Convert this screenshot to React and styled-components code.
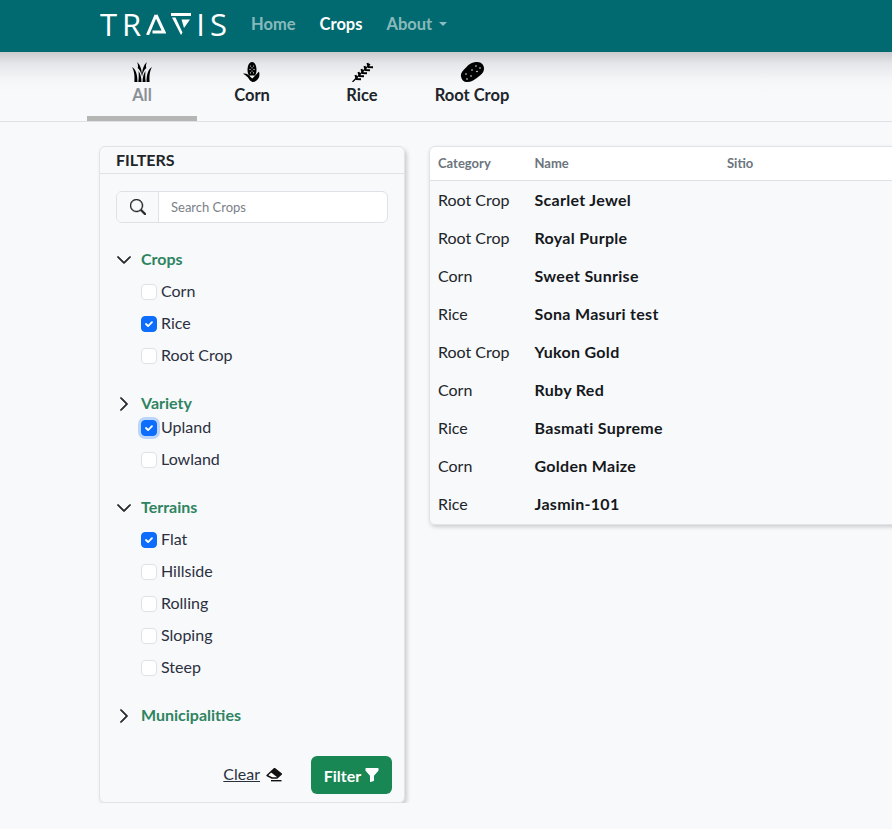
import styled, { createGlobalStyle } from "styled-components";
import { BsChevronDown, BsChevronRight, BsFunnelFill, BsSearch } from "react-icons/bs";

const GlobalStyle = createGlobalStyle`
  html, body {
    margin: 0;
    overflow: hidden;
    background: #f8f9fb;
  }
  body {
    font-family: Lato, "Noto Sans", sans-serif;
    font-size: 16px;
    color: #212529;
  }
`;

const Navbar = styled.nav`
  position: relative;
  z-index: 2;
  height: 52px;
  box-sizing: border-box;
  padding: 0 0 4px 100px;
  display: flex;
  align-items: center;
  background: #006a70;
`;

const Brand = styled.div`
  width: 127px;
  height: 22px;
  margin-right: 24px;
  display: flex;
  align-items: center;
  justify-content: space-between;
  color: #fff;
  font-size: 31px;
  line-height: 22px;
  font-family: "Open Sans", sans-serif;
  font-weight: 500;
`;

const NavLink = styled.a`
  margin-right: 24px;
  display: flex;
  align-items: center;
  font-weight: 700;
  font-size: 16.5px;
  color: ${({ $active }) => ($active ? "#fff" : "rgba(255,255,255,.55)")};
`;

const Caret = styled.span`
  margin-left: 7px;
  border-top: 4px solid currentColor;
  border-left: 4px solid transparent;
  border-right: 4px solid transparent;
`;

const TabBar = styled.div`
  height: 69px;
  padding-left: 87px;
  display: flex;
  border-bottom: 1px solid #dee2e6;
  background: linear-gradient(#c9cacd 0, #e6e7ea 12px, #f5f6f8 28px, #f8f9fb 40px);
`;

const Tab = styled.div`
  width: 110px;
  height: 69px;
  box-sizing: border-box;
  padding-top: 10px;
  display: flex;
  flex-direction: column;
  align-items: center;
  gap: 1px;
  font-weight: 700;
  font-size: 16.5px;
  line-height: 24px;
  color: ${({ $active }) => ($active ? "#8b9096" : "#212529")};
  border-bottom: 5px solid ${({ $active }) => ($active ? "#b5b5b3" : "transparent")};
`;

const TabIcon = styled.svg`
  width: 24px;
  height: 20px;
  flex: none;
`;

const Content = styled.div`
  padding: 24px 0 0 99px;
  display: flex;
  align-items: flex-start;
  gap: 24px;
`;

const FilterCard = styled.aside`
  width: 306px;
  height: 657px;
  flex: none;
  box-sizing: border-box;
  display: flex;
  flex-direction: column;
  border: 1px solid #e0e3e7;
  border-radius: 6px;
  box-shadow: 2px 3px 4px rgba(0, 0, 0, 0.18);
`;

const FilterHeader = styled.div`
  height: 24px;
  padding: 0 0 2px 16px;
  display: flex;
  align-items: center;
  font-weight: 700;
  font-size: 16px;
  border-bottom: 1px solid #dee2e6;
`;

const FilterBody = styled.div`
  flex: 1;
  padding: 17px 16px 0;
`;

const SearchGroup = styled.div`
  width: 272px;
  height: 32px;
  box-sizing: border-box;
  margin-bottom: 25px;
  display: flex;
  border: 1px solid #dee2e6;
  border-radius: 6px;
  background: #fff;
  overflow: hidden;
`;

const SearchAddon = styled.span`
  width: 41px;
  flex: none;
  display: flex;
  align-items: center;
  justify-content: center;
  background: #f8f9fa;
  border-right: 1px solid #dee2e6;
  font-size: 16px;
  svg {
    stroke: currentColor;
    stroke-width: 0.4;
  }
`;

const SearchInput = styled.div`
  padding: 0 0 1px 12px;
  display: flex;
  align-items: center;
  font-size: 13px;
  color: #7b8188;
`;

const Group = styled.section`
  padding-bottom: 16px;
`;

const GroupTitle = styled.div`
  height: 24px;
  margin-bottom: ${({ $tight }) => ($tight ? "0" : "8px")};
  display: flex;
  align-items: center;
  gap: 9px;
  font-weight: 700;
  color: #2e8461;
`;

const TitleText = styled.span`
  margin-top: -4px;
`;

const Chevron = styled.span`
  width: 16px;
  display: flex;
  justify-content: center;
  font-size: 16px;
  color: #212529;
  svg {
    stroke: currentColor;
    stroke-width: 1;
  }
`;

const Option = styled.label`
  height: 24px;
  margin: 0 0 8px 25px;
  display: flex;
  align-items: center;
  gap: 4px;
  color: #2b3040;
`;

const OptionText = styled.span`
  margin-top: -4px;
`;

const CheckBox = styled.span`
  width: 16px;
  height: 16px;
  flex: none;
  box-sizing: border-box;
  display: flex;
  align-items: center;
  justify-content: center;
  border-radius: 4px;
  border: 1px solid ${({ $checked }) => ($checked ? "#0d6efd" : "#dee2e6")};
  background: ${({ $checked }) => ($checked ? "#0d6efd" : "#fff")};
  box-shadow: ${({ $focus }) => ($focus ? "0 0 0 3px #bcd6fb" : "none")};
`;

const FilterFooter = styled.div`
  padding: 0 12px 8px 0;
  display: flex;
  align-items: center;
  justify-content: flex-end;
`;

const ClearLink = styled.a`
  margin-right: 29px;
  display: flex;
  align-items: center;
  gap: 6px;
  color: #2b3040;
`;

const ClearText = styled.span`
  margin-top: -4px;
  text-decoration: underline;
`;

const FilterButton = styled.button`
  width: 81px;
  height: 38px;
  display: flex;
  align-items: center;
  justify-content: center;
  gap: 3px;
  padding: 0 0 0 1px;
  border: none;
  border-radius: 6px;
  background: #198754;
  color: #fff;
  font: 700 16px Lato, sans-serif;
`;

const TableCard = styled.div`
  width: 620px;
  flex: none;
  box-sizing: border-box;
  padding-bottom: 1px;
  border: 1px solid #e0e3e7;
  border-radius: 6px;
  box-shadow: 1px 2px 4px rgba(0, 0, 0, 0.18);
`;

const Row = styled.div`
  height: 38px;
  box-sizing: border-box;
  padding: 0 0 2px 8px;
  display: grid;
  grid-template-columns: 96.5px 192.5px 1fr;
  align-items: center;
`;

const HeadRow = styled(Row)`
  height: 34px;
  background: #fff;
  border-radius: 6px 0 0 0;
  border-bottom: 1px solid #dee2e6;
  font-weight: 700;
  font-size: 13px;
  color: #6c757d;
`;

const CropName = styled.span`
  font-weight: 700;
  letter-spacing: 0.3px;
  color: #15181b;
`;

const Check = () => (
  <svg width="12" height="12" viewBox="0 0 20 20">
    <path d="M5 10l3.500 3.500L15 7" fill="none" stroke="#fff" strokeWidth="3" strokeLinecap="round" strokeLinejoin="round" />
  </svg>
);

const EraserIcon = () => (
  <svg width="16" height="14" viewBox="0 0 16 14">
    <path d="M8.500.5L15.500 6 11 10H6L1 7.500z" fill="#fff" stroke="#111" strokeWidth="1.400" strokeLinejoin="round" />
    <path d="M8.500.5L15.500 6 11.500 9.500 4.500 4z" fill="#111" />
    <path d="M5 12.700h10.500" stroke="#111" strokeWidth="1.400" />
  </svg>
);

const GrassIcon = () => (
  <TabIcon viewBox="0 0 24 20">
    <path d="M2 5c3.500 2 5.500 7 5.500 15H4.400C4.800 13 4.200 9 2 5zM22 5c-3.500 2-5.500 7-5.500 15h3.100C19.200 13 19.800 9 22 5z" />
    <path d="M7 0c3.500 3 5 8 5 14.500C11.200 10.500 9.800 8 7.700 6 8.300 4 8 2 7 0zM17 0c-3.500 3-5 8-5 14.500 .8-4 2.200-6.500 4.300-8.500C15.700 4 16 2 17 0z" />
    <path d="M8.500 9c2 3 3 6.500 3 11H8.300C8.800 16 8.900 12 8.500 9zM15.500 9c-2 3-3 6.500-3 11h3.200C15.200 16 15.100 12 15.500 9z" />
  </TabIcon>
);

const CornIcon = () => (
  <TabIcon viewBox="0 0 24 20">
    <path d="M12 0c3 0 4.500 4 4.500 8 0 2-.5 4-1.500 5.500H9C8 12 7.500 10 7.500 8 7.500 4 9 0 12 0z" />
    <g fill="#eceef0">
      <circle cx="10.500" cy="4" r=".6" />
      <circle cx="13.500" cy="4" r=".6" />
      <circle cx="12" cy="5.800" r=".6" />
      <circle cx="10" cy="7.400" r=".6" />
      <circle cx="14" cy="7.400" r=".6" />
      <circle cx="12" cy="9" r=".6" />
      <circle cx="10.500" cy="10.800" r=".6" />
      <circle cx="13.500" cy="10.800" r=".6" />
    </g>
    <path d="M3 11.500c3.500-.5 6 1 7.500 3.500l1.800 1.500L19 9.500c1 3.500.3 6.500-2.200 8.800-1.500 1.300-3 1.700-4.300 1.700C9.500 19 9 16.500 7.500 15 6.300 13.800 4.800 13 3 11.500z" />
  </TabIcon>
);

const RiceIcon = () => (
  <TabIcon viewBox="0 0 24 20">
    <g fill="none" stroke="#000" strokeWidth="2.100">
      <path d="M2.500 20L20 2" strokeWidth="1.300" />
      <path d="M5.500 13L6.700 17l4.300.2M8.500 10L9.700 14l4.300.2M11.500 7L12.700 11l4.300.2M14.500 4L15.700 8l4.300.2M17.500 1L18.700 5l4.300.2" />
    </g>
  </TabIcon>
);

const PotatoIcon = () => (
  <TabIcon viewBox="0 0 24 20">
    <path d="M1 14.500C.3 11 3 8.500 5.500 6 8.500 3 11 .3 16 0c5-.3 8 2.500 8 6.500 0 4-3 6.500-6.500 9-3.500 2.500-6 4.500-10.500 4.500C3.500 20 1.500 18 1 14.500z" />
    <g fill="#eceef0">
      <circle cx="16" cy="4" r=".8" />
      <circle cx="20" cy="6" r=".8" />
      <circle cx="12" cy="8" r=".8" />
      <circle cx="17" cy="9.500" r=".8" />
      <circle cx="6" cy="12" r=".8" />
      <circle cx="11" cy="14" r=".8" />
      <circle cx="7" cy="17" r=".8" />
    </g>
  </TabIcon>
);

const LogoA = () => (
  <svg width="20" height="22" viewBox="0 0 20 22">
    <path d="M10 2L1.500 22M10 2l8 17H6.500" fill="none" stroke="#fff" strokeWidth="3" />
  </svg>
);

const LogoV = () => (
  <svg width="20" height="22" viewBox="0 0 20 22">
    <path d="M0 0h20v3H0zM1 4.500h3.500l7 15L10 22zM10.500 6.500h8.500l-6 8.500z" fill="#fff" />
  </svg>
);

const tabs = [
  { label: "All", icon: <GrassIcon />, active: true },
  { label: "Corn", icon: <CornIcon /> },
  { label: "Rice", icon: <RiceIcon /> },
  { label: "Root Crop", icon: <PotatoIcon /> },
];

const groups = [
  {
    title: "Crops",
    open: true,
    items: [{ label: "Corn" }, { label: "Rice", checked: true }, { label: "Root Crop" }],
  },
  {
    title: "Variety",
    tight: true,
    items: [{ label: "Upland", checked: true, focus: true }, { label: "Lowland" }],
  },
  {
    title: "Terrains",
    open: true,
    items: [
      { label: "Flat", checked: true },
      { label: "Hillside" },
      { label: "Rolling" },
      { label: "Sloping" },
      { label: "Steep" },
    ],
  },
  { title: "Municipalities", items: [] },
];

const crops = [
  ["Root Crop", "Scarlet Jewel"],
  ["Root Crop", "Royal Purple"],
  ["Corn", "Sweet Sunrise"],
  ["Rice", "Sona Masuri test"],
  ["Root Crop", "Yukon Gold"],
  ["Corn", "Ruby Red"],
  ["Rice", "Basmati Supreme"],
  ["Corn", "Golden Maize"],
  ["Rice", "Jasmin-101"],
];

const App = () => {
  return (
    <>
      <GlobalStyle />
      <Navbar>
        <Brand>
          <span>T</span>
          <span>R</span>
          <LogoA />
          <LogoV />
          <span>I</span>
          <span>S</span>
        </Brand>
        <NavLink>Home</NavLink>
        <NavLink $active>Crops</NavLink>
        <NavLink>
          About
          <Caret />
        </NavLink>
      </Navbar>
      <TabBar>
        {tabs.map((tab) => (
          <Tab key={tab.label} $active={tab.active}>
            {tab.icon}
            {tab.label}
          </Tab>
        ))}
      </TabBar>
      <Content>
        <FilterCard>
          <FilterHeader>FILTERS</FilterHeader>
          <FilterBody>
            <SearchGroup>
              <SearchAddon>
                <BsSearch />
              </SearchAddon>
              <SearchInput>Search Crops</SearchInput>
            </SearchGroup>
            {groups.map((group) => (
              <Group key={group.title}>
                <GroupTitle $tight={group.tight}>
                  <Chevron>{group.open ? <BsChevronDown /> : <BsChevronRight />}</Chevron>
                  <TitleText>{group.title}</TitleText>
                </GroupTitle>
                {group.items.map((item) => (
                  <Option key={item.label}>
                    <CheckBox $checked={item.checked} $focus={item.focus}>
                      {item.checked && <Check />}
                    </CheckBox>
                    <OptionText>{item.label}</OptionText>
                  </Option>
                ))}
              </Group>
            ))}
          </FilterBody>
          <FilterFooter>
            <ClearLink>
              <ClearText>Clear</ClearText>
              <EraserIcon />
            </ClearLink>
            <FilterButton>
              Filter
              <BsFunnelFill />
            </FilterButton>
          </FilterFooter>
        </FilterCard>
        <TableCard>
          <HeadRow>
            <span>Category</span>
            <span>Name</span>
            <span>Sitio</span>
          </HeadRow>
          {crops.map(([category, name]) => (
            <Row key={name}>
              <span>{category}</span>
              <CropName>{name}</CropName>
            </Row>
          ))}
        </TableCard>
      </Content>
    </>
  );
};

export default App;
